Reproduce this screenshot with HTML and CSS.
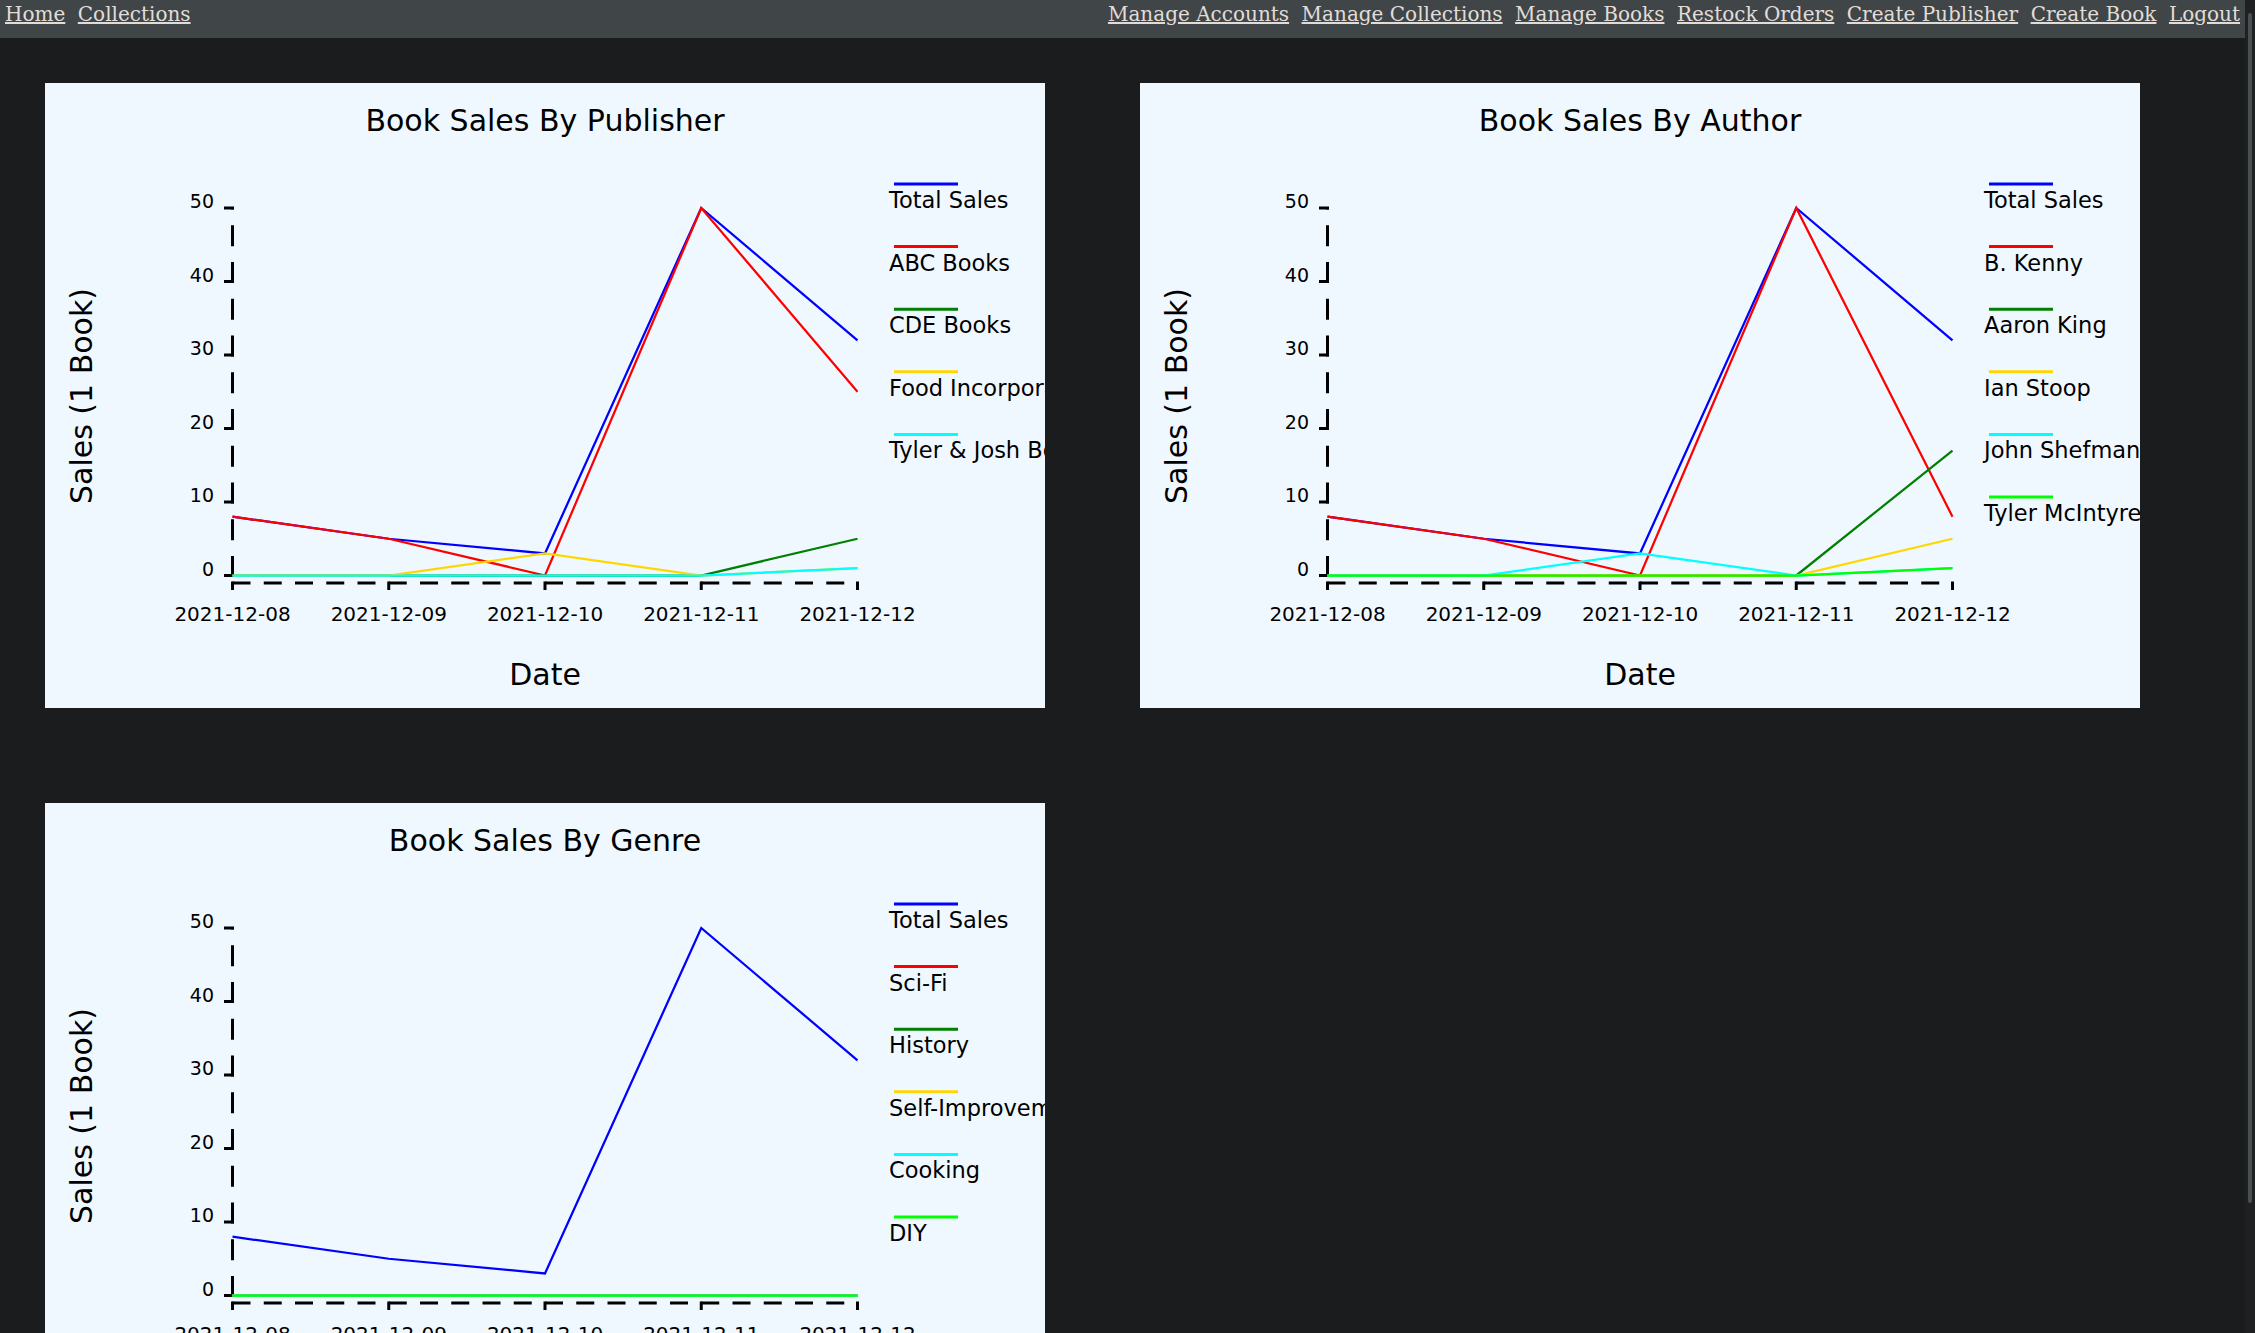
FILE: index.html
```html
<!DOCTYPE html>
<html lang="en">
<head>
<meta charset="utf-8">
<title>Sales Dashboard</title>
<link rel="stylesheet" href="styles.css">
</head>
<body>
<nav class="topnav">
  <div class="nav-group">
    <a href="#">Home</a>
    <a href="#">Collections</a>
  </div>
  <div class="nav-group">
    <a href="#">Manage Accounts</a>
    <a href="#">Manage Collections</a>
    <a href="#">Manage Books</a>
    <a href="#">Restock Orders</a>
    <a href="#">Create Publisher</a>
    <a href="#">Create Book</a>
    <a href="#">Logout</a>
  </div>
</nav>
<main class="charts">
  <section class="chart-card">
    <svg class="chart" width="1000" height="625" viewBox="0 0 1000 625">
      <text class="chart-title" x="500" y="47.5">Book Sales By Publisher</text>
      <text class="axis-label" transform="rotate(-90)" x="-313" y="46.5">Sales (1 Book)</text>
      <g class="y-ticks">
        <line class="domain" x1="187.5" y1="494" x2="187.5" y2="125"/>
        <line class="tick" x1="179" y1="125" x2="189" y2="125"/>
        <line class="tick" x1="179" y1="198.5" x2="189" y2="198.5"/>
        <line class="tick" x1="179" y1="272" x2="189" y2="272"/>
        <line class="tick" x1="179" y1="345.5" x2="189" y2="345.5"/>
        <line class="tick" x1="179" y1="419" x2="189" y2="419"/>
        <line class="tick" x1="179" y1="492.5" x2="189" y2="492.5"/>
        <text class="y-tick-label" x="169" y="125">50</text>
        <text class="y-tick-label" x="169" y="198.5">40</text>
        <text class="y-tick-label" x="169" y="272">30</text>
        <text class="y-tick-label" x="169" y="345.5">20</text>
        <text class="y-tick-label" x="169" y="419">10</text>
        <text class="y-tick-label" x="169" y="492.5">0</text>
      </g>
      <g class="x-ticks">
        <line class="domain-x" x1="187.5" y1="500" x2="812.5" y2="500"/>
        <line class="tick" x1="187.5" y1="498.5" x2="187.5" y2="507"/>
        <line class="tick" x1="343.75" y1="498.5" x2="343.75" y2="507"/>
        <line class="tick" x1="500" y1="498.5" x2="500" y2="507"/>
        <line class="tick" x1="656.25" y1="498.5" x2="656.25" y2="507"/>
        <line class="tick" x1="812.5" y1="498.5" x2="812.5" y2="507"/>
        <text class="x-tick-label" x="187.5" y="538">2021-12-08</text>
        <text class="x-tick-label" x="343.75" y="538">2021-12-09</text>
        <text class="x-tick-label" x="500" y="538">2021-12-10</text>
        <text class="x-tick-label" x="656.25" y="538">2021-12-11</text>
        <text class="x-tick-label" x="812.5" y="538">2021-12-12</text>
      </g>
      <text class="axis-label-x" x="500" y="602">Date</text>
      <polyline class="series s-blue" points="187.5,433.7 343.75,455.75 500,470.45 656.25,125 812.5,257.3"/>
      <polyline class="series s-red" points="187.5,433.7 343.75,455.75 500,492.5 656.25,125 812.5,308.75"/>
      <polyline class="series s-green" points="187.5,492.5 343.75,492.5 500,492.5 656.25,492.5 812.5,455.75"/>
      <polyline class="series s-gold" points="187.5,492.5 343.75,492.5 500,470.45 656.25,492.5 812.5,485.15"/>
      <polyline class="series s-cyan" points="187.5,492.5 343.75,492.5 500,492.5 656.25,492.5 812.5,485.15"/>
      <g class="legend">
        <line class="legend-line s-blue" x1="849" y1="101" x2="913" y2="101"/>
        <text class="legend-label" x="844" y="125">Total Sales</text>
        <line class="legend-line s-red" x1="849" y1="163.6" x2="913" y2="163.6"/>
        <text class="legend-label" x="844" y="187.6">ABC Books</text>
        <line class="legend-line s-green" x1="849" y1="226.2" x2="913" y2="226.2"/>
        <text class="legend-label" x="844" y="250.2">CDE Books</text>
        <line class="legend-line s-gold" x1="849" y1="288.8" x2="913" y2="288.8"/>
        <text class="legend-label" x="844" y="312.8">Food Incorporated</text>
        <line class="legend-line s-cyan" x1="849" y1="351.4" x2="913" y2="351.4"/>
        <text class="legend-label" x="844" y="375.4">Tyler &amp; Josh Books</text>
      </g>
    </svg>
  </section>

  <section class="chart-card">
    <svg class="chart" width="1000" height="625" viewBox="0 0 1000 625">
      <text class="chart-title" x="500" y="47.5">Book Sales By Author</text>
      <text class="axis-label" transform="rotate(-90)" x="-313" y="46.5">Sales (1 Book)</text>
      <g class="y-ticks">
        <line class="domain" x1="187.5" y1="494" x2="187.5" y2="125"/>
        <line class="tick" x1="179" y1="125" x2="189" y2="125"/>
        <line class="tick" x1="179" y1="198.5" x2="189" y2="198.5"/>
        <line class="tick" x1="179" y1="272" x2="189" y2="272"/>
        <line class="tick" x1="179" y1="345.5" x2="189" y2="345.5"/>
        <line class="tick" x1="179" y1="419" x2="189" y2="419"/>
        <line class="tick" x1="179" y1="492.5" x2="189" y2="492.5"/>
        <text class="y-tick-label" x="169" y="125">50</text>
        <text class="y-tick-label" x="169" y="198.5">40</text>
        <text class="y-tick-label" x="169" y="272">30</text>
        <text class="y-tick-label" x="169" y="345.5">20</text>
        <text class="y-tick-label" x="169" y="419">10</text>
        <text class="y-tick-label" x="169" y="492.5">0</text>
      </g>
      <g class="x-ticks">
        <line class="domain-x" x1="187.5" y1="500" x2="812.5" y2="500"/>
        <line class="tick" x1="187.5" y1="498.5" x2="187.5" y2="507"/>
        <line class="tick" x1="343.75" y1="498.5" x2="343.75" y2="507"/>
        <line class="tick" x1="500" y1="498.5" x2="500" y2="507"/>
        <line class="tick" x1="656.25" y1="498.5" x2="656.25" y2="507"/>
        <line class="tick" x1="812.5" y1="498.5" x2="812.5" y2="507"/>
        <text class="x-tick-label" x="187.5" y="538">2021-12-08</text>
        <text class="x-tick-label" x="343.75" y="538">2021-12-09</text>
        <text class="x-tick-label" x="500" y="538">2021-12-10</text>
        <text class="x-tick-label" x="656.25" y="538">2021-12-11</text>
        <text class="x-tick-label" x="812.5" y="538">2021-12-12</text>
      </g>
      <text class="axis-label-x" x="500" y="602">Date</text>
      <polyline class="series s-blue" points="187.5,433.7 343.75,455.75 500,470.45 656.25,125 812.5,257.3"/>
      <polyline class="series s-red" points="187.5,433.7 343.75,455.75 500,492.5 656.25,125 812.5,433.7"/>
      <polyline class="series s-green" points="187.5,492.5 343.75,492.5 500,492.5 656.25,492.5 812.5,367.55"/>
      <polyline class="series s-gold" points="187.5,492.5 343.75,492.5 500,492.5 656.25,492.5 812.5,455.75"/>
      <polyline class="series s-cyan" points="187.5,492.5 343.75,492.5 500,470.45 656.25,492.5 812.5,485.15"/>
      <polyline class="series s-lime" points="187.5,492.5 343.75,492.5 500,492.5 656.25,492.5 812.5,485.15"/>
      <g class="legend">
        <line class="legend-line s-blue" x1="849" y1="101" x2="913" y2="101"/>
        <text class="legend-label" x="844" y="125">Total Sales</text>
        <line class="legend-line s-red" x1="849" y1="163.6" x2="913" y2="163.6"/>
        <text class="legend-label" x="844" y="187.6">B. Kenny</text>
        <line class="legend-line s-green" x1="849" y1="226.2" x2="913" y2="226.2"/>
        <text class="legend-label" x="844" y="250.2">Aaron King</text>
        <line class="legend-line s-gold" x1="849" y1="288.8" x2="913" y2="288.8"/>
        <text class="legend-label" x="844" y="312.8">Ian Stoop</text>
        <line class="legend-line s-cyan" x1="849" y1="351.4" x2="913" y2="351.4"/>
        <text class="legend-label" x="844" y="375.4">John Shefman</text>
        <line class="legend-line s-lime" x1="849" y1="414" x2="913" y2="414"/>
        <text class="legend-label" x="844" y="438">Tyler McIntyre</text>
      </g>
    </svg>
  </section>

  <section class="chart-card">
    <svg class="chart" width="1000" height="625" viewBox="0 0 1000 625">
      <text class="chart-title" x="500" y="47.5">Book Sales By Genre</text>
      <text class="axis-label" transform="rotate(-90)" x="-313" y="46.5">Sales (1 Book)</text>
      <g class="y-ticks">
        <line class="domain" x1="187.5" y1="494" x2="187.5" y2="125"/>
        <line class="tick" x1="179" y1="125" x2="189" y2="125"/>
        <line class="tick" x1="179" y1="198.5" x2="189" y2="198.5"/>
        <line class="tick" x1="179" y1="272" x2="189" y2="272"/>
        <line class="tick" x1="179" y1="345.5" x2="189" y2="345.5"/>
        <line class="tick" x1="179" y1="419" x2="189" y2="419"/>
        <line class="tick" x1="179" y1="492.5" x2="189" y2="492.5"/>
        <text class="y-tick-label" x="169" y="125">50</text>
        <text class="y-tick-label" x="169" y="198.5">40</text>
        <text class="y-tick-label" x="169" y="272">30</text>
        <text class="y-tick-label" x="169" y="345.5">20</text>
        <text class="y-tick-label" x="169" y="419">10</text>
        <text class="y-tick-label" x="169" y="492.5">0</text>
      </g>
      <g class="x-ticks">
        <line class="domain-x" x1="187.5" y1="500" x2="812.5" y2="500"/>
        <line class="tick" x1="187.5" y1="498.5" x2="187.5" y2="507"/>
        <line class="tick" x1="343.75" y1="498.5" x2="343.75" y2="507"/>
        <line class="tick" x1="500" y1="498.5" x2="500" y2="507"/>
        <line class="tick" x1="656.25" y1="498.5" x2="656.25" y2="507"/>
        <line class="tick" x1="812.5" y1="498.5" x2="812.5" y2="507"/>
        <text class="x-tick-label" x="187.5" y="538">2021-12-08</text>
        <text class="x-tick-label" x="343.75" y="538">2021-12-09</text>
        <text class="x-tick-label" x="500" y="538">2021-12-10</text>
        <text class="x-tick-label" x="656.25" y="538">2021-12-11</text>
        <text class="x-tick-label" x="812.5" y="538">2021-12-12</text>
      </g>
      <text class="axis-label-x" x="500" y="602">Date</text>
      <polyline class="series s-blue" points="187.5,433.7 343.75,455.75 500,470.45 656.25,125 812.5,257.3"/>
      <polyline class="series s-red" points="187.5,492.5 343.75,492.5 500,492.5 656.25,492.5 812.5,492.5"/>
      <polyline class="series s-green" points="187.5,492.5 343.75,492.5 500,492.5 656.25,492.5 812.5,492.5"/>
      <polyline class="series s-gold" points="187.5,492.5 343.75,492.5 500,492.5 656.25,492.5 812.5,492.5"/>
      <polyline class="series s-cyan" points="187.5,492.5 343.75,492.5 500,492.5 656.25,492.5 812.5,492.5"/>
      <polyline class="series s-lime" points="187.5,492.5 343.75,492.5 500,492.5 656.25,492.5 812.5,492.5"/>
      <g class="legend">
        <line class="legend-line s-blue" x1="849" y1="101" x2="913" y2="101"/>
        <text class="legend-label" x="844" y="125">Total Sales</text>
        <line class="legend-line s-red" x1="849" y1="163.6" x2="913" y2="163.6"/>
        <text class="legend-label" x="844" y="187.6">Sci-Fi</text>
        <line class="legend-line s-green" x1="849" y1="226.2" x2="913" y2="226.2"/>
        <text class="legend-label" x="844" y="250.2">History</text>
        <line class="legend-line s-gold" x1="849" y1="288.8" x2="913" y2="288.8"/>
        <text class="legend-label" x="844" y="312.8">Self-Improvement</text>
        <line class="legend-line s-cyan" x1="849" y1="351.4" x2="913" y2="351.4"/>
        <text class="legend-label" x="844" y="375.4">Cooking</text>
        <line class="legend-line s-lime" x1="849" y1="414" x2="913" y2="414"/>
        <text class="legend-label" x="844" y="438">DIY</text>
      </g>
    </svg>
  </section>
</main>
<div class="scroll-track" aria-hidden="true"><div class="scroll-thumb"></div></div>
</body>
</html>
```
FILE: styles.css
```css
html, body {
  margin: 0;
  padding: 0;
}
body {
  background: #1b1c1e;
  color: #e0ddd8;
  font-family: "DejaVu Serif", serif;
  padding-right: 10px;
}
.topnav {
  display: flex;
  justify-content: space-between;
  align-items: flex-start;
  height: 38px;
  box-sizing: border-box;
  padding: 3px 5px 0 5px;
  background: #404548;
  font-size: 20px;
  line-height: 23px;
}
.nav-group {
  display: flex;
  gap: 12.5px;
}
.topnav a {
  color: #e0ddd8;
  text-decoration: underline;
}
.charts {
  display: grid;
  grid-template-columns: 1000px 1000px;
  column-gap: 95px;
  row-gap: 94.5px;
  padding: 45px 0 50px 45px;
}
.chart-card {
  width: 1000px;
  height: 625px;
  background: #f0f8ff;
}
.chart {
  display: block;
  overflow: hidden;
  font-family: "DejaVu Sans", sans-serif;
}
.chart-title {
  font-size: 30px;
  text-anchor: middle;
  fill: #000;
}
.axis-label {
  font-size: 30px;
  text-anchor: middle;
  fill: #000;
}
.axis-label-x {
  font-size: 30px;
  text-anchor: middle;
  fill: #000;
}
.y-tick-label {
  font-size: 19px;
  text-anchor: end;
  fill: #000;
}
.x-tick-label {
  font-size: 20px;
  text-anchor: middle;
  fill: #000;
}
.domain {
  stroke: #000;
  stroke-width: 3;
  stroke-dasharray: 21 15.75;
}
.domain-x {
  stroke: #000;
  stroke-width: 3;
  stroke-dasharray: 18 13.25;
}
.tick {
  stroke: #000;
  stroke-width: 3;
}
.series {
  fill: none;
  stroke-width: 2.25;
}
.legend-line {
  stroke-width: 3;
}
.legend-label {
  font-size: 22.5px;
  fill: #000;
}
.s-blue { stroke: #0000ff; }
.s-red { stroke: #ff0000; }
.s-green { stroke: #008000; }
.s-gold { stroke: #ffd700; }
.s-cyan { stroke: #00ffff; }
.s-lime { stroke: #00ff00; }

.scroll-track {
  position: fixed;
  top: 0;
  right: 0;
  width: 10px;
  height: 100vh;
  background: #1f2022;
}
.scroll-thumb {
  margin: 13px 0 0 3px;
  width: 4px;
  height: 1190px;
  border-radius: 2px;
  background: #4a4f52;
}
```
